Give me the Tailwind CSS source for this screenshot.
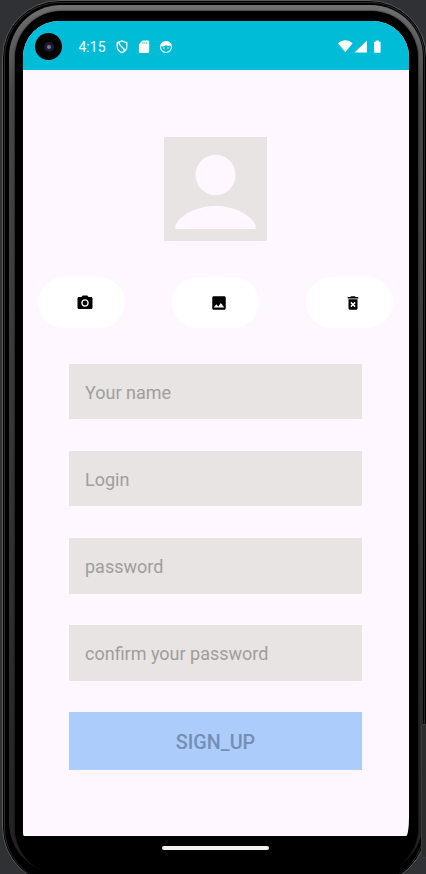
<!DOCTYPE html>
<html lang="en">
<head>
<meta charset="utf-8">
<meta name="viewport" content="width=device-width">
<title>Sign up</title>
<script src="https://cdn.jsdelivr.net/npm/@tailwindcss/browser@4"></script>
</head>
<body class="h-[874px] w-[426px] overflow-hidden bg-[#303134] font-['Roboto',sans-serif]">
<div class="relative h-[874px] w-[426px] overflow-hidden">
  <!-- side key -->
  <div class="absolute left-[421px] top-[724px] z-10 h-[134px] w-[8px] rounded-[2px] border border-[#3a3a3a] bg-[#2c2c2c]"></div>
  <!-- device frame -->
  <div class="ml-[2px] h-[885px] w-[425px] rounded-[58px] border border-[#5a5a5a] bg-black p-[1px]">
    <div class="h-full rounded-[56px] border-x border-t border-[#2a2a2a] pl-[4px] pr-px pt-[2px]">
      <div class="h-[869px] rounded-[52px] bg-linear-to-b from-[#707070] via-[#474747] via-10% to-[#222222] to-98% pl-[6px] pr-[5px] pt-[6px]">
        <div class="h-[864px] rounded-[47px] bg-black pl-[8px] pt-[10px] shadow-[0_0_2px_0_#000]">
          <!-- screen -->
          <div class="flex h-[815px] w-[386px] flex-col overflow-hidden rounded-t-[36px] rounded-bl-[1px_4px] rounded-br-[3px_18px] bg-[#fef7ff]">
            <header class="flex h-[49px] shrink-0 items-center bg-[#00bcd7] pl-[12px] pr-[27px] pt-[2px] text-white">
              <div class="flex size-[27px] items-center justify-center rounded-full bg-[#050506]">
                <div class="flex size-[10px] items-center justify-center rounded-full bg-[#1b1b2b]"><div class="size-[4px] rounded-full bg-[#7774a5]"></div></div>
              </div>
              <span class="ml-[16.5px] w-[36.5px] text-[14px] leading-[18px]">4:15</span>
              <svg class="size-[14px]" viewBox="0 0 14 14" fill="none" stroke="white" stroke-width="1.3"><path d="M3.8 2.1 7 1l4.8 1.8v3.7c0 2.8-1.8 5-4.8 6.2-3-1.2-4.8-3.4-4.8-6.2V2.8l1.6-.7c0 5 5.7 4.2 5.5 9.1"/></svg>
              <svg class="ml-[8px] size-[14px]" viewBox="0 0 14 14"><path fill="white" d="M5.5.5H11a1.2 1.2 0 0 1 1.2 1.2v10.1A1.2 1.2 0 0 1 11 13H3.1a1.2 1.2 0 0 1-1.2-1.2V4.3z"/><path stroke="#00bcd7" stroke-width=".7" d="M6 2v2M7.9 2v2M9.8 2v2"/></svg>
              <svg class="ml-[8px] size-[14px]" viewBox="0 0 14 14"><circle cx="7" cy="7" r="5.5" fill="none" stroke="white" stroke-width="1.2"/><path fill="white" d="M1.5 6.2C2 2.8 4 1.2 7 1.2s5 1.6 5.5 5L10.7 5.5 9 6 7 5.2 3.8 6.4z"/><circle cx="5" cy="7.9" r=".75" fill="white"/><circle cx="9" cy="7.9" r=".75" fill="white"/></svg>
              <svg class="ml-auto h-[14px] w-[44px]" viewBox="0 0 44 14" fill="white"><path d="M0 3.2C4-.7 10.6-.7 14.6 3.2L7.3 12.2zM29 .5v12H16.5zM36 1.7h1.8V.5h3v1.2h1.8v10.2q0 .9-.9.9h-4.800q-.9 0-.9-.9z"/></svg>
            </header>
            <main class="flex flex-1 flex-col items-center pr-px pt-[67px]">
              <svg class="h-[104px] w-[103px] shrink-0" viewBox="0 0 104 104" preserveAspectRatio="none"><path fill="#e7e4e3" d="M0 0h104v104H0z"/><circle cx="52" cy="38" r="20.2" fill="#fef7ff"/><path fill="#fef7ff" d="M11.5 92v-3.5C17 77 34 69 52 69s35 8 40.5 19.5V92z"/></svg>
              <div class="mt-[36px] flex w-full justify-between px-[15px]">
                <button class="flex h-[51px] w-[87px] items-center justify-center rounded-[26px] bg-white pl-[7px]">
                  <svg class="size-[18px]" viewBox="0 0 24 24"><circle cx="12" cy="12" r="3.2"/><path d="M9 2 7.17 4H4c-1.1 0-2 .9-2 2v12c0 1.1.9 2 2 2h16c1.1 0 2-.9 2-2V6c0-1.1-.9-2-2-2h-3.17L15 2zm3 15c-2.76 0-5-2.24-5-5s2.24-5 5-5 5 2.24 5 5-2.24 5-5 5z"/></svg>
                </button>
                <button class="flex h-[51px] w-[87px] items-center justify-center rounded-[26px] bg-white pl-[7px]">
                  <svg class="size-[18px]" viewBox="0 0 24 24"><path d="M21 19V5c0-1.1-.9-2-2-2H5c-1.1 0-2 .9-2 2v14c0 1.1.9 2 2 2h14c1.1 0 2-.9 2-2zM8.5 13.5l2.5 3.01L14.5 12l4.5 6H5z"/></svg>
                </button>
                <button class="flex h-[51px] w-[87px] items-center justify-center rounded-[26px] bg-white pl-[7px]">
                  <svg class="size-[18px]" viewBox="0 0 24 24"><path d="M6 19c0 1.1.9 2 2 2h8c1.1 0 2-.9 2-2V7H6zm2.46-7.12 1.41-1.41L12 12.59l2.12-2.12 1.41 1.41L13.41 14l2.12 2.12-1.41 1.41L12 15.41l-2.12 2.12-1.41-1.41L10.59 14zM15.5 4l-1-1h-5l-1 1H5v2h14V4z"/></svg>
                </button>
              </div>
              <form class="mt-[36px] flex w-[293px] flex-col">
                <div class="flex h-[55px] items-center bg-[#e7e4e3] px-[16px] pt-[2px] text-[18px] text-[#a09d9c]">Your name</div>
                <div class="mt-[32px] flex h-[55px] items-center bg-[#e7e4e3] px-[16px] pt-[2px] text-[18px] text-[#a09d9c]">Login</div>
                <div class="mt-[32px] flex h-[56px] items-center bg-[#e7e4e3] px-[16px] text-[18px] text-[#a09d9c]">password</div>
                <div class="mt-[31px] flex h-[56px] items-center bg-[#e7e4e3] px-[16px] text-[18px] text-[#a09d9c]">confirm your password</div>
                <button type="button" class="mt-[31px] flex h-[58px] items-center justify-center bg-[#accdfc] pt-[4px] text-[19.8px] font-medium text-[#768eb3]">SIGN_UP</button>
              </form>
            </main>
          </div>
          <div class="ml-[139px] mt-[10px] h-[4px] w-[107px] rounded-full bg-[#f0f0ef]"></div>
        </div>
      </div>
    </div>
  </div>
</div>
</body>
</html>
